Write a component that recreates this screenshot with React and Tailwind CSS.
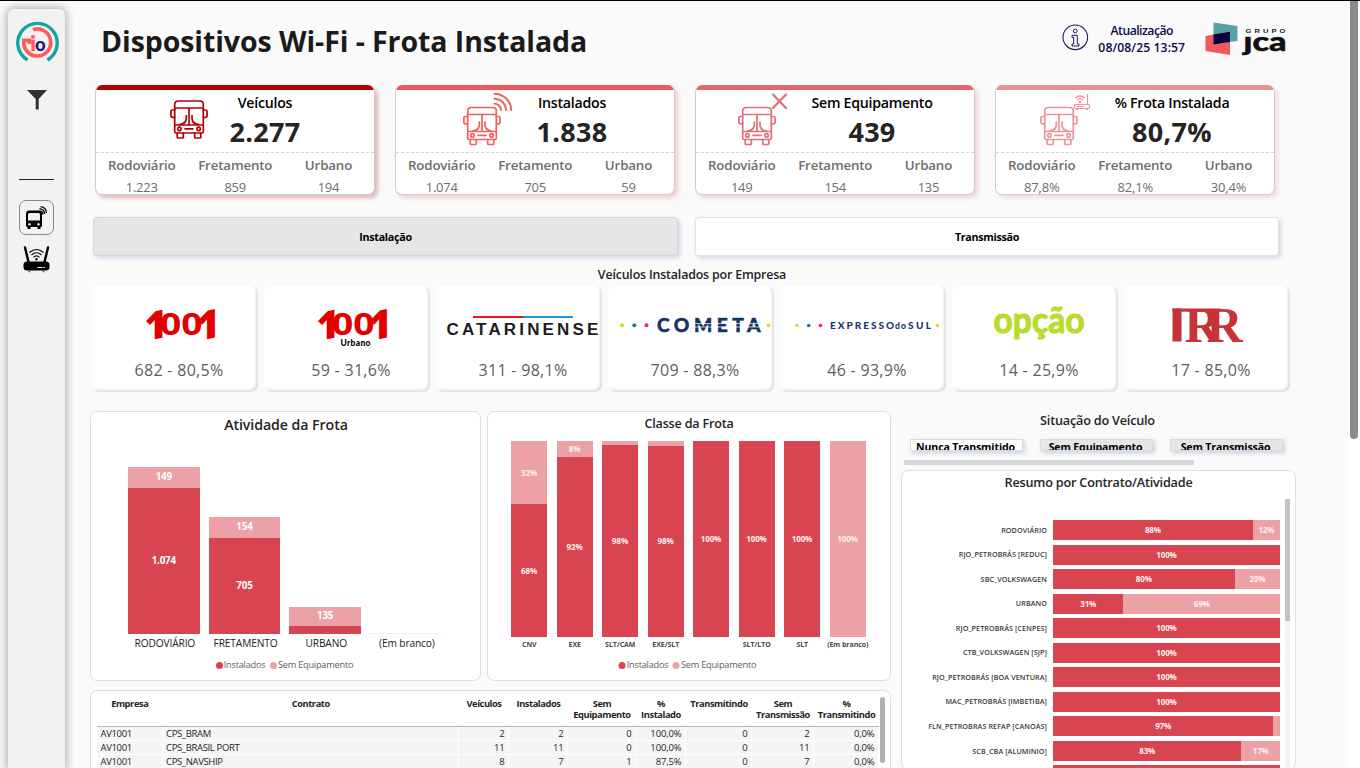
import React from "react";

const kpis = [
  {
    title: "Veículos", value: "2.277", color: "#b50003", badge: "none", icon: "ml-[75px] w-[38px]", text: "w-[114px]",
    top: "bg-[#b50003]", shadow: "shadow-[3px_3px_4px_rgba(181,0,3,0.28)]", split: ["1.223", "859", "194"],
  },
  {
    title: "Instalados", value: "1.838", color: "#f0605f", badge: "signal", icon: "ml-[68px] w-[49px]", text: "w-[120px]",
    top: "bg-[#ee5a5b]", shadow: "shadow-[3px_3px_4px_rgba(238,90,91,0.28)]", split: ["1.074", "705", "59"],
  },
  {
    title: "Sem Equipamento", value: "439", color: "#e0707a", badge: "cross", icon: "ml-[43px] w-[49px]", text: "w-[170px]",
    top: "bg-[#de6770]", shadow: "shadow-[3px_3px_4px_rgba(222,103,112,0.28)]", split: ["149", "154", "135"],
  },
  {
    title: "% Frota Instalada", value: "80,7%", color: "#ea959b", badge: "router", icon: "ml-[45px] w-[51px]", text: "w-[162px]",
    top: "bg-[#e69297]", shadow: "shadow-[3px_3px_4px_rgba(230,146,151,0.28)]", split: ["87,8%", "82,1%", "30,4%"],
  },
];

const contracts = [
  ["RODOVIÁRIO", 88],
  ["RJO_PETROBRÁS [REDUC]", 100],
  ["SBC_VOLKSWAGEN", 80],
  ["URBANO", 31],
  ["RJO_PETROBRÁS [CENPES]", 100],
  ["CTB_VOLKSWAGEN [SJP]", 100],
  ["RJO_PETROBRÁS [BOA VENTURA]", 100],
  ["MAC_PETROBRÁS [IMBETIBA]", 100],
  ["FLN_PETROBRAS REFAP [CANOAS]", 97],
  ["SCB_CBA [ALUMINIO]", 83],
  ["", 100],
];

const classes = [
  ["CNV", 67.7, "68%", "32%"],
  ["EXE", 92, "92%", "8%"],
  ["SLT/CAM", 98, "98%", ""],
  ["EXE/SLT", 97.6, "98%", ""],
  ["", 100, "100%", ""],
  ["SLT/LTO", 100, "100%", ""],
  ["SLT", 100, "100%", ""],
  ["(Em branco)", 0, "", "100%"],
];

const activity = [
  ["RODOVIÁRIO", 146, 21, "1.074", "149"],
  ["FRETAMENTO", 96, 21, "705", "154"],
  ["URBANO", 8, 19, "", "135"],
  ["(Em branco)", 0, 1, "", ""],
];

const rows = [
  ["AV1001", "CPS_BRAM", "2", "2", "0", "100,0%", "0", "2", "0,0%"],
  ["AV1001", "CPS_BRASIL PORT", "11", "11", "0", "100,0%", "0", "11", "0,0%"],
  ["AV1001", "CPS_NAVSHIP", "8", "7", "1", "87,5%", "0", "7", "0,0%"],
];

function Bus() {
  return (
    <g fill="none" strokeWidth="1.700" strokeLinejoin="round" strokeLinecap="round">
      <path d="M4.700 29.500V4.500Q4.700 1 8.300 1H29.700Q33.300 1 33.300 4.500V31.500Q33.300 33 31.800 33H6.200Q4.700 33 4.700 31.500ZM4.700 8H33.300M19 8V24.500M4.700 25H33.300" />
      <path d="M4.700 10H2.500Q.9 10 .9 11.600V15.500Q.9 17.300 2.500 17.300H4.700M33.300 10H35.500Q37.100 10 37.100 11.600V15.500Q37.100 17.300 35.500 17.300H33.300" />
      <path d="M16.300 15.500V19Q15.500 24 9.500 24.500M22 15.500V19Q22.800 24 28.500 24.500M15 28.800H23" />
      <circle cx="9.400" cy="28.900" r="1.700" />
      <circle cx="28.600" cy="28.900" r="1.700" />
      <path d="M7.200 33V37Q7.200 38 8.200 38H12.300Q13.300 38 13.300 37V33M24.700 33V37Q24.700 38 25.700 38H29.800Q30.800 38 30.800 37V33" />
    </g>
  );
}

function KpiIcon({ badge, color }) {
  if (badge === "none")
    return <svg className="mt-[9.500px] h-[40px] w-[38px]" viewBox="0 0 38 40" stroke={color}><Bus /></svg>;
  return (
    <svg className="mt-[2px] h-[55px] w-[52px]" viewBox="0 0 52 55" stroke={color} fill="none">
      <g transform="translate(0 14.500)"><Bus /></g>
      {badge === "signal" && (
        <g strokeWidth="1.900" strokeLinecap="round">
          <path d="M31.500 1.700A17 17 0 0 1 48.300 18M31.500 6.700A11.500 11.500 0 0 1 43 18M31.500 11.600A6.500 6.500 0 0 1 38 18" />
        </g>
      )}
      {badge === "cross" && <path d="M35 2.500L48 16M48 2.500L35 16" strokeWidth="2.400" strokeLinecap="round" />}
      {badge === "router" && (
        <g strokeWidth="1.200">
          <rect x="34.500" y="12.500" width="15" height="4" rx="1.200" />
          <path d="M47.500 12.500V2M36 14.500H44M36 17.500H38M46 17.500H48M35.500 6Q40 2 44.500 6M37 8Q40 5.200 43 8" />
          <circle cx="40" cy="10" r="0.800" />
        </g>
      )}
    </svg>
  );
}

function KpiCard({ k }) {
  return (
    <div className={`flex h-[110px] w-[280px] flex-col overflow-hidden rounded-[7px] border border-t-0 border-[#cfcdcd] bg-white ${k.shadow}`}>
      <div className={`h-[5px] shrink-0 ${k.top}`} />
      <div className="flex h-[63px] shrink-0 border-b border-dashed border-[#d5d5d5]">
        <div className={`${k.icon} -translate-x-px shrink-0`}><KpiIcon badge={k.badge} color={k.color} /></div>
        <div className={`${k.text} -translate-x-px shrink-0 whitespace-nowrap text-center`}>
          <div className="mt-[3px] text-[14.200px] font-semibold leading-[20px] tracking-[-0.260px] text-black">{k.title}</div>
          <div className="text-[27px] font-bold leading-[38px] tracking-[0.300px] text-[#252423]">{k.value}</div>
        </div>
      </div>
      <div className="grid w-[280px] -translate-x-px grid-cols-[93.500px_93.500px_93px] text-center text-[#6d6d6d]">
        {["Rodoviário", "Fretamento", "Urbano"].map((n, i) => (
          <div key={n}>
            <div className="mt-[2px] text-[13.300px] font-semibold leading-[20px] tracking-[-0.150px]">{n}</div>
            <div className="mt-px text-[13px] leading-[22px] tracking-[-0.200px]">{k.split[i]}</div>
          </div>
        ))}
      </div>
    </div>
  );
}

function Thousand({ urban }) {
  return (
    <svg className="h-[56px] w-full" viewBox="0 0 166 56">
      <g fill="#e30000" fontFamily="Open Sans">
        <text transform="translate(52.500 47.500) skewY(-12)" fontWeight="800" fontSize="39">1</text>
        <text transform="translate(68 40.500) scale(1.240 1)" fontWeight="700" fontSize="30">00</text>
        <text transform="translate(104.500 47.500) skewY(-12)" fontWeight="800" fontSize="40">1</text>
      </g>
      {urban && <text x="76.500" y="52" fontFamily="Lato" fontWeight="900" fontSize="8.500" textLength="30">Urbano</text>}
    </svg>
  );
}

function Catarinense() {
  return (
    <svg className="h-[56px] w-full" viewBox="0 0 166 56">
      <rect x="37" y="22" width="50" height="2" fill="#f51414" />
      <rect x="87" y="22" width="50" height="2" fill="#1c98dc" />
      <text x="10.500" y="41" fontFamily="Liberation Sans" fontWeight="700" fontSize="16" letterSpacing="3" textLength="155" lengthAdjust="spacingAndGlyphs" fill="#1d1d1d">CATARINENSE</text>
    </svg>
  );
}

function Cometa() {
  return (
    <svg className="h-[56px] w-full" viewBox="0 0 166 56">
      <circle cx="14" cy="31.300" r="2" fill="#cddc39" />
      <circle cx="26.300" cy="31.300" r="2" fill="#0b79c7" />
      <circle cx="38.500" cy="31.300" r="2" fill="#ec1e8c" />
      <circle cx="160.500" cy="31.300" r="1.900" fill="#ffc629" />
      <text x="49" y="38" fontFamily="Lato" fontWeight="900" fontSize="19" letterSpacing="4.500" textLength="108" lengthAdjust="spacingAndGlyphs" fill="#14335f" stroke="#14335f" strokeWidth="0.500">COMETA</text>
      <path d="M87 29.500H155M87 33H155" stroke="white" strokeWidth="0.700" />
    </svg>
  );
}

function Expresso() {
  return (
    <svg className="h-[56px] w-full" viewBox="0 0 166 56">
      <circle cx="17" cy="31.500" r="1.800" fill="#cddc39" />
      <circle cx="28.700" cy="31.500" r="1.800" fill="#0b79c7" />
      <circle cx="40.500" cy="31.500" r="1.800" fill="#ec1e8c" />
      <circle cx="157.500" cy="31.500" r="1.800" fill="#ffc629" />
      <g fontFamily="Lato" fontWeight="900" fill="#1b3764">
        <text x="50" y="35" fontSize="10" textLength="64">EXPRESSO</text>
        <text x="115" y="35" fontSize="8.500" letterSpacing="1.200">do</text>
        <text x="128" y="35" fontSize="10" textLength="23">SUL</text>
      </g>
    </svg>
  );
}

function Opcao() {
  return (
    <svg className="h-[64px] w-full" viewBox="0 0 166 64">
      <text x="41.500" y="38.500" fontFamily="Lato" fontWeight="700" fontSize="37" textLength="91" lengthAdjust="spacingAndGlyphs" fill="#b9db2c" stroke="#b9db2c" strokeWidth="1.200" strokeLinejoin="round">opção</text>
    </svg>
  );
}

function DoubleR() {
  return (
    <svg className="h-[56px] w-full" viewBox="0 0 166 56">
      <g fill="#c83338">
        <rect x="48.500" y="14.500" width="9" height="33" />
        <rect x="48.500" y="14.500" width="48" height="3.200" />
        <text x="60.500" y="47.500" fontFamily="Liberation Serif" fontWeight="700" fontSize="50" letterSpacing="-14">RR</text>
      </g>
    </svg>
  );
}

const companies = [
  [Thousand, "682 - 80,5%"],
  [() => <Thousand urban />, "59 - 31,6%"],
  [Catarinense, "311 - 98,1%"],
  [Cometa, "709 - 88,3%"],
  [Expresso, "46 - 93,9%"],
  [Opcao, "14 - 25,9%"],
  [DoubleR, "17 - 85,0%"],
];

function Legend() {
  return (
    <div className="flex items-center justify-center text-[9.200px] leading-[12px] tracking-[-0.220px] text-[#605e5c]">
      <span className="mr-[1px] h-[7px] w-[7px] rounded-full bg-[#d8444f]" />
      <span className="mr-[4.500px]">Instalados</span>
      <span className="mr-[1px] h-[7px] w-[7px] rounded-full bg-[#eba1a5]" />
      <span>Sem Equipamento</span>
    </div>
  );
}

function Sidebar() {
  return (
    <aside className="ml-[8px] mt-[8px] flex w-[57px] shrink-0 flex-col items-center rounded-t-[6px] bg-[#f3f2f1] shadow-[0_0_8px_2px_rgba(0,0,0,0.28)]">
      <svg className="mt-[11px] h-[44px] w-[44px]" viewBox="0 0 44 44" fill="none">
        <path d="M12.500 40A19.700 19.700 0 1 1 32.500 40" stroke="#0ea5a8" strokeWidth="3.400" />
        <path d="M18 9.700A13.500 13.500 0 1 1 9 20M7.300 20.300H14.500V24" stroke="#ff5a5c" strokeWidth="3.700" />
        <text x="15.500" y="30.500" fontFamily="Lato" fontWeight="900" fontSize="20" fill="#ff5a5c" stroke="#ff5a5c" strokeWidth="0.500">i</text>
        <text x="20" y="30.500" fontFamily="Lato" fontWeight="900" fontSize="18.500" fill="#1c1c68">o</text>
      </svg>
      <svg className="mt-[26px] h-[20px] w-[20px]" viewBox="0 0 20 20" fill="#323130">
        <path d="M0 0H20L11.700 9V19.500H8.700V9Z" />
      </svg>
      <div className="mt-[69px] h-px w-[35px] bg-[#252423]" />
      <div className="mt-[20px] flex h-[35px] w-[35px] items-center justify-center rounded-[7px] border border-[#8a8886]">
        <svg className="h-[24px] w-[24px] -translate-x-px" viewBox="0 0 24 24">
          <path fillRule="evenodd" d="M5 4.500H15Q18 4.500 18 8V19.500Q18 21 16.500 21V23H13.500V21H6.500V23H3.500V21Q2 21 2 19.500V8Q2 4.500 5 4.500ZM4 8.500V14.500H16V8.500Q16 7 14.500 7H5.500Q4 7 4 8.500ZM5.500 17A1.300 1.300 0 1 0 5.510 17ZM14.500 17A1.300 1.300 0 1 0 14.510 17Z" />
          <path d="M15.500 5Q18.500 5.500 19 8.500M15.500 2.600Q20.500 3.200 20.700 8M16.500 .7Q22.500 1.500 22.400 7" fill="none" stroke="black" strokeWidth="1.300" />
        </svg>
      </div>
      <svg className="mt-[11px] h-[27px] w-[28px] -translate-x-[0.500px]" viewBox="0 0 28 27">
        <path d="M2.500 1.500L6 16M25.500 1.500L22 16" stroke="black" strokeWidth="2.400" strokeLinecap="round" />
        <rect x="1" y="15.500" width="26" height="9" rx="3.500" />
        <path d="M6 25.500H8M20 25.500H22" stroke="#666" strokeWidth="1.500" />
        <path d="M15 21.500H23" stroke="white" strokeWidth="1" strokeDasharray="5 1 1.500 1" />
        <path d="M7 6.500Q14 .5 21 6.500M9 9Q14 4.500 19 9M11 11.300Q14 8.500 17 11.300" fill="none" stroke="black" strokeWidth="1.100" />
        <circle cx="14" cy="13.300" r="1.200" />
      </svg>
    </aside>
  );
}

function Header() {
  return (
    <header className="flex h-[84px] shrink-0 pl-[11px]">
      <h1 className="mt-[20px] w-[961px] whitespace-nowrap text-[28.500px] font-bold leading-[40px] tracking-[-0.080px] text-[#1a1a1a]">Dispositivos Wi-Fi - Frota Instalada</h1>
      <svg className="mt-[23px] h-[27px] w-[27px] shrink-0" viewBox="0 0 27 27" fill="none" stroke="#1a1a5c">
        <circle cx="13.300" cy="13.300" r="12.300" strokeWidth="1.100" />
        <circle cx="13.300" cy="7" r="1.900" />
        <path d="M10 11.300H15.300V20H17V22H10V20H11.700V13.300H10Z" />
      </svg>
      <div className="ml-[2.500px] mt-[21px] w-[100.500px] whitespace-nowrap text-center text-[12.200px] font-semibold leading-[17px] text-[#0a0a4a]">
        <div className="tracking-[-0.500px]">Atualização</div>
        <div className="tracking-[0.080px]">08/08/25 13:57</div>
      </div>
      <svg className="ml-[13px] mt-[20px] h-[36px] w-[84px] shrink-0" viewBox="0 0 84 36">
        <clipPath id="wordmark"><rect x="34" y="15.300" width="50" height="21" /></clipPath>
        <path d="M8.500 1.500L32.500 5V20L8.500 23Z" fill="#55a3a8" />
        <path d="M.5 15L25 10.500V34L.5 30Z" fill="#f25b5c" />
        <path d="M8.500 13.500L25 10.700V21L8.500 23.500Z" fill="#05053d" />
        <text x="40.500" y="11.500" fontFamily="Liberation Sans" fontWeight="700" fontSize="6.200" letterSpacing="2.500" textLength="43" lengthAdjust="spacingAndGlyphs" fill="#222">GRUPO</text>
        <g clipPath="url(#wordmark)">
          <text x="38.500" y="30" fontFamily="Lato" fontWeight="900" fontSize="26" textLength="43" lengthAdjust="spacingAndGlyphs" fill="#111" stroke="#111" strokeWidth="0.500">jca</text>
        </g>
      </svg>
    </header>
  );
}

function ActivityChart() {
  return (
    <section className="flex h-[270px] w-[391px] flex-col rounded-[7px] border border-[#dedede] bg-white">
      <h2 className="mt-[3px] translate-x-[0.500px] text-center text-[14.200px] font-semibold leading-[20px] tracking-[-0.080px] text-[#252423]">Atividade da Frota</h2>
      <div className="ml-[37px] flex h-[199px] items-end gap-[9.200px]">
        {activity.map(([n, a, b, la, lb]) => (
          <div key={n} className={`flex w-[71.500px] flex-col text-center text-[9.800px] font-bold tracking-[-0.200px] text-white ${la || lb ? "" : "opacity-20"}`}>
            <div className="flex items-center justify-center bg-[#eba1a5]" style={{ height: b }}>{lb}</div>
            <div className="flex items-center justify-center bg-[#d8444f]" style={{ height: a }}>{la}</div>
          </div>
        ))}
      </div>
      <div className="ml-[33.500px] mt-[2px] flex whitespace-nowrap text-center text-[10.200px] leading-[14px] tracking-[-0.130px] text-[#1a1a1a]">
        {activity.map(([n]) => <div key={n} className="w-[80.700px]">{n}</div>)}
      </div>
      <div className="mt-[9px] -translate-x-px"><Legend /></div>
    </section>
  );
}

function ClassChart() {
  return (
    <section className="flex h-[270px] w-[404px] flex-col rounded-[7px] border border-[#dedede] bg-white">
      <h2 className="mt-[2px] text-center text-[12.600px] font-semibold leading-[20px] tracking-[-0.200px] text-[#252423]">Classe da Frota</h2>
      <div className="ml-[23px] mt-[7px] flex h-[196px] gap-[9.500px] text-[8px] font-bold tracking-[-0.150px] text-[#fff0f0]">
        {classes.map(([n, p, la, lb], i) => (
          <div key={i} className="flex w-[36px] flex-col">
            <div className="flex items-center justify-center bg-[#eba1a5]" style={{ height: `${100 - p}%` }}>{lb}</div>
            <div className="flex items-center justify-center bg-[#d8444f]" style={{ height: `${p}%` }}>{la}</div>
          </div>
        ))}
      </div>
      <div className="ml-[18.500px] mt-[2px] flex whitespace-nowrap text-center text-[7px] font-bold leading-[12px] tracking-[-0.050px] text-[#4a4847]">
        {classes.map(([n], i) => <div key={i} className="flex w-[45.500px] justify-center">{n}</div>)}
      </div>
      <div className="mt-[8px] -translate-x-[1.500px]"><Legend /></div>
    </section>
  );
}

const cols = "grid grid-cols-[65.500px_296.500px_50px_59px_68px_50px_66px_62px_65px]";

function ContractTable() {
  return (
    <section className="mt-[9px] flex h-[90px] w-[801px] rounded-t-[7px] border border-b-0 border-[#dedede] bg-white pl-[6px]">
      <div className="w-[782px] text-[9.500px]">
        <div className={`${cols} h-[36px] whitespace-nowrap border-b border-[#b9b8c8] pt-[7px] text-center text-[9.300px] font-bold leading-[11px] tracking-[-0.420px] text-[#252423]`}>
          <div>Empresa</div>
          <div>Contrato</div>
          <div>Veículos</div>
          <div>Instalados</div>
          <div>Sem<br />Equipamento</div>
          <div>%<br />Instalado</div>
          <div>Transmitindo</div>
          <div>Sem<br />Transmissão</div>
          <div>%<br />Transmitindo</div>
        </div>
        {rows.map((r) => (
          <div key={r[1]} className={`${cols} h-[14px] leading-[13px] text-[#252423]`}>
            {r.map((c, i) => (
              <div key={i} className={`border-b border-r border-white bg-[#f5f5f5] ${i < 2 ? "pl-[3.500px] tracking-[-0.350px]" : "pr-[3.500px] text-right tracking-[-0.150px]"}`}>{c}</div>
            ))}
          </div>
        ))}
      </div>
      <div className="ml-px mt-[6px] h-[66px] w-[5px] rounded-full bg-[#b3b1b0]" />
    </section>
  );
}

function ContractChart() {
  return (
    <section className="mt-[5px] flex h-[300px] w-[395px] flex-col rounded-[7px] border border-[#dedede] bg-white">
      <h2 className="mt-[1px] h-[20px] shrink-0 text-center text-[12.700px] font-semibold leading-[20px] tracking-[-0.220px] text-[#252423]">Resumo por Contrato/Atividade</h2>
      <div className="mt-[7px] flex">
        <div className="mt-[21px] flex w-[378px] flex-col gap-[4.550px]">
          {contracts.map(([n, p], i) => (
            <div key={i} className="flex h-[20px] items-center text-[8px] font-bold">
              <div className="w-[145px] whitespace-nowrap text-right text-[7.200px] font-semibold tracking-[0.080px] text-[#3a3837]">{n}</div>
              <div className="ml-[6px] flex h-full w-[227px] tracking-[-0.150px] text-[#fff0f0]">
                <div className="flex items-center justify-center bg-[#d8444f]" style={{ width: `${p}%` }}>{i < 10 && `${p}%`}</div>
                <div className="flex items-center justify-center bg-[#eba1a5]" style={{ width: `${100 - p}%` }}>{p < 90 && `${100 - p}%`}</div>
              </div>
            </div>
          ))}
        </div>
        <div className="ml-[5px] h-[280px] w-[5px] bg-[#f3f3f3]"><div className="h-[122px] bg-[#c4c4c4]" /></div>
      </div>
    </section>
  );
}

export default function App() {
  return (
    <div className="flex h-[768px] w-[1360px] overflow-hidden border-t border-black bg-[#fafafa] font-['Open_Sans','Noto_Sans',sans-serif]">
      <Sidebar />
      <main className="flex w-[1283px] shrink-0 flex-col pl-[25px]">
        <Header />
        <div className="flex shrink-0 gap-[20px] pl-[5px]">
          {kpis.map((k) => <KpiCard key={k.title} k={k} />)}
        </div>
        <div className="mt-[22px] flex h-[39px] shrink-0 gap-[17px] pl-[3px] text-center text-[10.700px] font-bold leading-[38px] tracking-[-0.280px] text-black">
          <div className="w-[585px] rounded-[4px] border border-[#d6d6d6] bg-[#e6e6e6] shadow-[2px_2px_4px_rgba(120,150,190,0.35)]">Instalação</div>
          <div className="w-[584px] rounded-[4px] border border-[#e3e3e3] bg-white shadow-[2px_2px_4px_rgba(120,150,190,0.35)]">Transmissão</div>
        </div>
        <h2 className="h-[30px] w-[1204px] shrink-0 pt-[9px] text-center text-[12.400px] font-semibold leading-[20px] tracking-[-0.170px] text-[#252423]">Veículos Instalados por Empresa</h2>
        <div className="flex shrink-0 gap-[6px] pl-[2px]">
          {companies.map(([Logo, label]) => (
            <div key={label} className="flex h-[106px] w-[166px] flex-col rounded-[7px] bg-white shadow-[inset_-2px_-2px_3px_rgba(0,0,0,0.13)]">
              <div className="mt-[8px] h-[64px] overflow-hidden"><Logo /></div>
              <div className="pl-[8px] text-center text-[16px] font-medium leading-[24px] tracking-[0.300px] text-[#605e5c]">{label}</div>
            </div>
          ))}
        </div>
        <div className="mt-[19px] flex gap-[10px]">
          <div className="w-[801px]">
            <div className="flex gap-[6px]">
              <ActivityChart />
              <ClassChart />
            </div>
            <ContractTable />
          </div>
          <div className="w-[395px]">
            <h2 className="h-[28px] -translate-x-px text-center text-[12.700px] font-semibold leading-[19px] tracking-[-0.220px] text-[#252423]">Situação do Veículo</h2>
            <div className="flex h-[12px] gap-[17px] pl-[9px] text-center text-[10.600px] font-bold leading-[15px] tracking-[-0.150px] text-black">
              {["Nunca Transmitido", "Sem Equipamento", "Sem Transmissão"].map((t, i) => (
                <div key={t} className={`w-[113px] whitespace-nowrap shadow-[2px_2px_4px_rgba(120,150,190,0.4)] ${i ? "bg-[#e6e6e6]" : "bg-white"}`}>
                  <div className="h-[12px] border border-[#dcdcdc]"><div className="-ml-[2px] h-[9.500px] overflow-hidden">{t}</div></div>
                </div>
              ))}
            </div>
            <div className="ml-[3px] mt-[9px] h-[5px] w-[290px] bg-[#d8d8d8]" />
            <ContractChart />
          </div>
        </div>
      </main>
      <div className="w-[12px] shrink-0 bg-white pl-[2px]">
        <div className="h-[438px] w-[8px] rounded-b-full bg-[#8a8a8a]" />
      </div>
    </div>
  );
}
